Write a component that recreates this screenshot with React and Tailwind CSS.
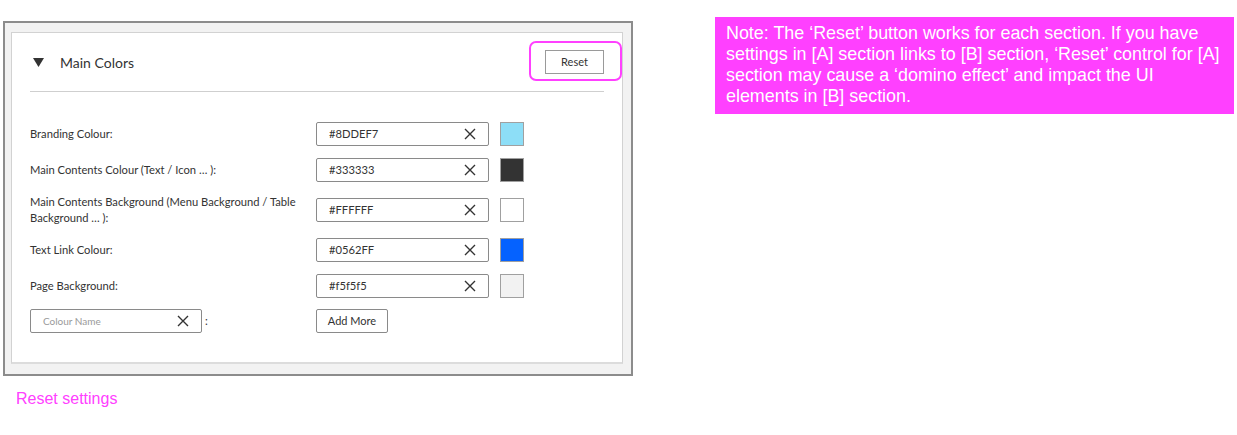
const rows = [
    { label: 'Branding Colour:', value: '#8DDEF7', swatch: 'bg-[#8DDEF7]' },
    { label: 'Main Contents Colour (Text / Icon … ):', value: '#333333', swatch: 'bg-[#333333]' },
    { label: 'Main Contents Background (Menu Background / Table Background … ):', value: '#FFFFFF', swatch: 'bg-white' },
    { label: 'Text Link Colour:', value: '#0562FF', swatch: 'bg-[#0562FF]' },
    { label: 'Page Background:', value: '#f5f5f5', swatch: 'bg-[#f2f2f2]' },
];

function ClearIcon() {
    return (
        <svg width="12" height="12" viewBox="0 0 12 12" className="shrink-0">
            <path d="M1 1 L11 11 M11 1 L1 11" stroke="#333" strokeWidth="1.4" fill="none" />
        </svg>
    );
}

function ColorInput({ value, placeholder, className }) {
    return (
        <div className={`h-6 flex items-center justify-between border border-[#8a8a8a] rounded-[2px] bg-white pl-3 pr-3 ${className}`}>
            <span className={value ? 'text-[#333]' : 'text-[#9a9a9a]'}>{value || placeholder}</span>
            <ClearIcon />
        </div>
    );
}

export default function App() {
    return (
        <div className="flex items-start bg-white min-h-[435px]" style={{ fontFamily: 'Lato, "Noto Sans", sans-serif' }}>
            <div className="w-[632px] shrink-0">
                <div className="ml-[3px] mt-[21px] w-[630px] h-[355px] border-2 border-[#8c8c8c] bg-[#f2f2f2] pt-[9px] pl-[6px] pr-[8px] pb-[10px] flex">
                    <div className="flex-1 bg-white border border-[#d2d2d2] border-b-2 border-b-[#dcdcdc] px-[18px] text-[11.2px] text-[#333]">
                        <div className="h-[59px] flex items-center justify-between border-b border-[#cfcfcf]">
                            <div className="flex items-center">
                                <svg width="11" height="9" viewBox="0 0 11 9" className="ml-[3px]">
                                    <path d="M0 0 H11 L5.5 9 Z" fill="#333" />
                                </svg>
                                <span className="ml-[16px] text-[14px] text-[#333]">Main Colors</span>
                            </div>
                            <div className="relative">
                                <button className="w-[59px] h-6 border border-[#9a9a9a] bg-white text-[11px] text-[#333]">Reset</button>
                                <div className="absolute -left-[16px] -top-[9px] -right-[18px] -bottom-[7px] border-2 border-[#ff40ff] rounded-[7px]"></div>
                            </div>
                        </div>

                        <div className="mt-[30px] flex flex-col gap-3">
                            {rows.map((r) => (
                                <div key={r.value} className="flex items-center">
                                    <div className="w-[286px] pr-4 leading-4">{r.label}</div>
                                    <ColorInput value={r.value} className="w-[173px]" />
                                    <div className={`ml-[11px] w-6 h-6 border border-[#a0a0a0] ${r.swatch}`}></div>
                                </div>
                            ))}
                            <div className="flex items-center -mt-px">
                                <ColorInput placeholder="Colour Name" className="w-[172px] text-[10px]" />
                                <span className="ml-[3px] w-[111px]">:</span>
                                <button className="w-[72px] h-6 border border-[#8a8a8a] rounded-[2px] bg-white text-[11px] text-[#333]">Add More</button>
                            </div>
                        </div>
                    </div>
                </div>
                <div className="ml-4 mt-[11px] text-[16px] text-[#ff40ff]" style={{ fontFamily: '"Liberation Sans", Arial, sans-serif' }}>Reset settings</div>
            </div>

            <div className="ml-[83px] mt-[17px] w-[519px] h-[97px] bg-[#ff40ff] text-white text-[17.9px] leading-[21px] pl-[11px] pr-[4px] pt-[6px]" style={{ fontFamily: '"Liberation Sans", Arial, sans-serif' }}>
                Note: The ‘Reset’ button works for each section. If you have settings in [A] section links to [B] section, ‘Reset’ control for [A] section may cause a ‘domino effect’ and impact the UI elements in [B] section.
            </div>
        </div>
    );
}
